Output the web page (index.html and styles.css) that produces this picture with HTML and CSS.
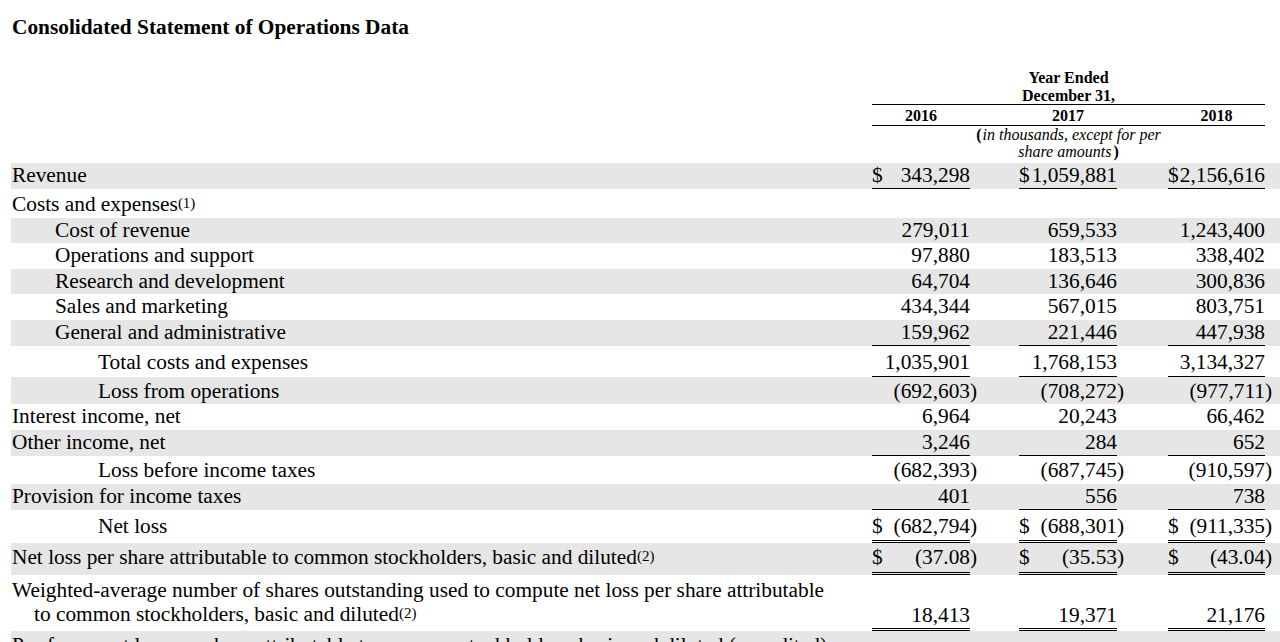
FILE: index.html
```html
<!DOCTYPE html>
<html lang="en">
<head>
<meta charset="utf-8">
<title>Consolidated Statement of Operations Data</title>
<link rel="stylesheet" href="styles.css">
</head>
<body>
<h1 class="title">Consolidated Statement of Operations Data</h1>
<table class="ops">
  <colgroup>
    <col class="c-label"><col class="c-num"><col class="c-par"><col class="c-gap1"><col class="c-num"><col class="c-par"><col class="c-gap2"><col class="c-num3"><col class="c-par3">
  </colgroup>
  <thead>
    <tr class="h-period"><th></th><th colspan="7" class="rule">Year Ended<br>December 31,</th><th></th></tr>
    <tr class="h-years"><th></th><th class="rule">2016</th><th class="rule" colspan="2"></th><th class="rule">2017</th><th class="rule" colspan="2"></th><th class="rule">2018</th><th></th></tr>
    <tr class="h-units"><th></th><th colspan="7"><div class="units"><b class="po">(</b><i>in thousands, except for per share amounts</i><b class="pc">)</b></div></th><th></th></tr>
  </thead>
  <tbody>
    <tr class="shade"><td class="lbl">Revenue</td><td class="num rule"><span class="cur">$</span>343,298</td><td></td><td></td><td class="num rule"><span class="cur">$</span>1,059,881</td><td></td><td></td><td class="num rule"><span class="cur">$</span>2,156,616</td><td></td></tr>
    <tr class="pt3"><td class="lbl">Costs and expenses<sup>(1)</sup></td><td></td><td></td><td></td><td></td><td></td><td></td><td></td><td></td></tr>
    <tr class="shade"><td class="lbl ind1">Cost of revenue</td><td class="num">279,011</td><td></td><td></td><td class="num">659,533</td><td></td><td></td><td class="num">1,243,400</td><td></td></tr>
    <tr><td class="lbl ind1">Operations and support</td><td class="num">97,880</td><td></td><td></td><td class="num">183,513</td><td></td><td></td><td class="num">338,402</td><td></td></tr>
    <tr class="shade"><td class="lbl ind1">Research and development</td><td class="num">64,704</td><td></td><td></td><td class="num">136,646</td><td></td><td></td><td class="num">300,836</td><td></td></tr>
    <tr><td class="lbl ind1">Sales and marketing</td><td class="num">434,344</td><td></td><td></td><td class="num">567,015</td><td></td><td></td><td class="num">803,751</td><td></td></tr>
    <tr class="shade"><td class="lbl ind1">General and administrative</td><td class="num rule">159,962</td><td></td><td></td><td class="num rule">221,446</td><td></td><td></td><td class="num rule">447,938</td><td></td></tr>
    <tr class="pt4"><td class="lbl ind2">Total costs and expenses</td><td class="num rule">1,035,901</td><td></td><td></td><td class="num rule">1,768,153</td><td></td><td></td><td class="num rule">3,134,327</td><td></td></tr>
    <tr class="shade pt2"><td class="lbl ind2">Loss from operations</td><td class="num">(692,603</td><td class="par">)</td><td></td><td class="num">(708,272</td><td class="par">)</td><td></td><td class="num">(977,711</td><td class="par">)</td></tr>
    <tr><td class="lbl">Interest income, net</td><td class="num">6,964</td><td></td><td></td><td class="num">20,243</td><td></td><td></td><td class="num">66,462</td><td></td></tr>
    <tr class="shade"><td class="lbl">Other income, net</td><td class="num rule">3,246</td><td></td><td></td><td class="num rule">284</td><td></td><td></td><td class="num rule">652</td><td></td></tr>
    <tr class="pt2"><td class="lbl ind2">Loss before income taxes</td><td class="num">(682,393</td><td class="par">)</td><td></td><td class="num">(687,745</td><td class="par">)</td><td></td><td class="num">(910,597</td><td class="par">)</td></tr>
    <tr class="shade"><td class="lbl">Provision for income taxes</td><td class="num rule">401</td><td></td><td></td><td class="num rule">556</td><td></td><td></td><td class="num rule">738</td><td></td></tr>
    <tr class="pt4"><td class="lbl ind2">Net loss</td><td class="num dbl"><span class="cur">$</span>(682,794</td><td class="par">)</td><td></td><td class="num dbl"><span class="cur">$</span>(688,301</td><td class="par">)</td><td></td><td class="num dbl"><span class="cur">$</span>(911,335</td><td class="par">)</td></tr>
    <tr class="shade pt2 pb2"><td class="lbl">Net loss per share attributable to common stockholders, basic and diluted<sup>(2)</sup></td><td class="num dbl"><span class="cur">$</span>(37.08</td><td class="par">)</td><td></td><td class="num dbl"><span class="cur">$</span>(35.53</td><td class="par">)</td><td></td><td class="num dbl"><span class="cur">$</span>(43.04</td><td class="par">)</td></tr>
    <tr class="multi"><td class="lbl hang">Weighted-average number of shares outstanding used to compute net loss per share attributable<br>to common stockholders, basic and diluted<sup>(2)</sup></td><td class="num dbl">18,413</td><td></td><td></td><td class="num dbl">19,371</td><td></td><td></td><td class="num dbl">21,176</td><td></td></tr>
    <tr class="shade pt2"><td class="lbl">Pro forma net loss per share attributable to common stockholders, basic and diluted (unaudited)</td><td></td><td></td><td></td><td></td><td></td><td></td><td></td><td></td></tr>
  </tbody>
</table>
</body>
</html>
```

FILE: styles.css
```css
html, body {
  margin: 0;
  padding: 0;
  background: #ffffff;
}

body {
  font-family: "Liberation Serif", "Times New Roman", serif;
  color: #000000;
  overflow: hidden;
}

.title {
  margin: 0;
  padding: 14px 0 0 12px;
  font-size: 21.33px;
  line-height: 26px;
  font-weight: bold;
}

.ops {
  margin: 28px 0 0 11px;
  width: 1269px;
  table-layout: fixed;
  border-collapse: separate;
  border-spacing: 0;
  font-size: 21.33px;
}

.c-label { width: 861px; }
.c-num { width: 98px; }
.c-par { width: 10px; }
.c-gap1 { width: 39px; }
.c-gap2 { width: 41px; }
.c-num3 { width: 97px; }
.c-par3 { width: 15px; }

.ops th {
  padding: 0;
  font-size: 16px;
  line-height: 17.5px;
  font-weight: bold;
  text-align: center;
  vertical-align: bottom;
}

.ops th.rule {
  border-bottom: 1px solid #000;
}

.h-period th {
  padding-top: 1px;
}

.h-years th {
  padding-top: 2px;
}

.h-units th {
  padding-bottom: 2px;
  font-weight: normal;
}

.units {
  width: 208px;
  margin: 0 auto;
  line-height: 17.5px;
}

.units i {
  font-style: italic;
}

.units .po {
  margin-right: 1px;
}

.units .pc {
  margin-left: 2px;
}

.ops td {
  padding: 0;
  line-height: 25.5px;
  vertical-align: baseline;
  white-space: nowrap;
}

.ops tr.shade td {
  background: #e6e6e6;
}

.lbl {
  padding-left: 1px !important;
  text-align: left;
}

.ind1 { padding-left: 44px !important; }
.ind2 { padding-left: 87px !important; }

.num {
  text-align: right;
}

.cur {
  float: left;
}

.par {
  text-align: left;
}

.ops td.rule {
  border-bottom: 1px solid #000;
}

.ops td.dbl {
  border-bottom: 3px double #000;
}

.ops tr.pt2 td { padding-top: 2px; }
.ops tr.pt3 td { padding-top: 3px; }
.ops tr.pt4 td { padding-top: 4px; }
.ops tr.pb2 td { padding-bottom: 2px; }

sup {
  font-size: 15px;
  line-height: 0;
  vertical-align: 3px;
}

.ops tr.multi td {
  padding-top: 3px;
  vertical-align: bottom;
}

.ops tr.multi td.lbl {
  line-height: 24px;
  padding-bottom: 5px;
  white-space: normal;
}

.hang {
  padding-left: 23px !important;
  text-indent: -22px;
}
```
